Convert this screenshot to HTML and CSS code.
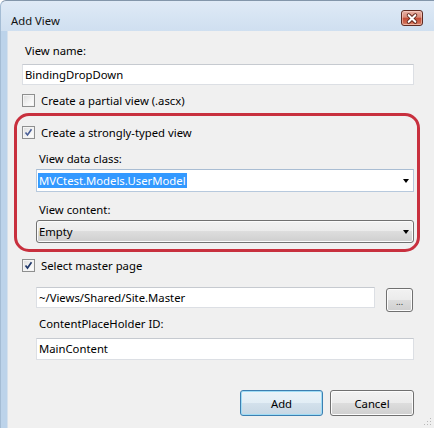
FILE: index.html
```html
<!DOCTYPE html>
<html>
<head>
<meta charset="utf-8">
<link rel="stylesheet" href="styles.css">
</head>
<body>
<div class="window">
  <div class="titlebar">
    <span class="title">Add View</span>
    <span class="close"><svg width="21" height="15" viewBox="0 0 21 15"><path d="M7 4 L14 11 M14 4 L7 11" stroke="#5a2016" stroke-width="4" stroke-linecap="round"/><path d="M7 4 L14 11 M14 4 L7 11" stroke="#ffffff" stroke-width="2.2" stroke-linecap="round"/></svg></span>
  </div>
  <div class="body">
    <div class="label">View name:</div>
    <div class="textbox">BindingDropDown</div>
    <div class="check first"><span class="box"></span><span>Create a partial view (.ascx)</span></div>
    <div class="group">
      <div class="check"><span class="box"><svg width="9" height="9" viewBox="0 0 9 9"><path d="M1.5 4.5 L3.5 7 L7.5 1.2" fill="none" stroke="#4a5f97" stroke-width="1.6"/></svg></span><span>Create a strongly-typed view</span></div>
      <div class="label sub">View data class:</div>
      <div class="combo edit"><span class="sel">MVCtest.Models.UserModel</span><span class="arrow"></span></div>
      <div class="label sub second">View content:</div>
      <div class="combo drop"><span class="val">Empty</span><span class="arrow"></span></div>
    </div>
    <div class="check third"><span class="box"><svg width="9" height="9" viewBox="0 0 9 9"><path d="M1.5 4.5 L3.5 7 L7.5 1.2" fill="none" stroke="#21396b" stroke-width="1.7"/></svg></span><span>Select master page</span></div>
    <div class="master-row">
      <div class="textbox master">~/Views/Shared/Site.Master</div>
      <div class="btn browse"><span>...</span></div>
    </div>
    <div class="label sub cph">ContentPlaceHolder ID:</div>
    <div class="textbox cph-box">MainContent</div>
    <div class="actions">
      <div class="btn default">Add</div>
      <div class="btn">Cancel</div>
    </div>
    <svg class="grip" width="8" height="10" viewBox="0 0 8 10"><g fill="#b8b8b8"><rect x="6" y="1" width="1" height="1"/><rect x="6" y="4" width="1" height="1"/><rect x="3" y="4" width="1" height="1"/><rect x="6" y="7" width="1" height="1"/><rect x="3" y="7" width="1" height="1"/><rect x="0" y="7" width="1" height="1"/></g></svg>
  </div>
</div>
</body>
</html>
```
FILE: styles.css
```css
html, body {
  margin: 0;
  padding: 0;
  width: 434px;
  height: 428px;
  overflow: hidden;
  background: #ffffff;
}

body {
  font-family: "Noto Sans", "Open Sans", sans-serif;
  font-size: 11.3px;
  color: #000000;
}

.window {
  box-sizing: border-box;
  width: 434px;
  height: 428px;
  display: flex;
  flex-direction: column;
  border-top: 1px solid #8396aa;
  border-left: 1px solid #a4bcd4;
  border-top-left-radius: 6px;
  background: linear-gradient(#dfeaf6 0px, #cfdff0 30px, #bcd3ea 30px);
}

.titlebar {
  box-sizing: border-box;
  height: 30px;
  padding-top: 8px;
  padding-left: 10px;
  padding-right: 11px;
  display: flex;
  align-items: center;
  justify-content: space-between;
}

.title {
  color: #111111;
  line-height: 15px;
}

.close {
  box-sizing: border-box;
  width: 22px;
  height: 16px;
  margin-top: -4px;
  border: 1px solid #5e2a22;
  border-radius: 3px;
  background: linear-gradient(#e9b3a8 0%, #d88a78 45%, #c24a35 50%, #cf6a52 85%, #e1987f 100%);
  box-shadow: inset 0 0 0 1px rgba(255, 220, 210, 0.5);
  display: flex;
  align-items: center;
  justify-content: center;
}

.close svg {
  display: block;
}

.body {
  position: relative;
  flex: 1;
  margin-left: 6px;
  background: #f0f0f0;
  box-shadow: inset 1px 0 0 #d6e1ec;
  padding: 12px 20px 0 15px;
  display: flex;
  flex-direction: column;
  align-items: flex-start;
}

.label {
  line-height: 15px;
  margin-left: 3px;
  white-space: nowrap;
}

.textbox {
  box-sizing: border-box;
  width: 392px;
  height: 21px;
  margin-top: 6px;
  background: #ffffff;
  border: 1px solid #dcdfe4;
  border-top-color: #c6cad0;
  padding-left: 2px;
  line-height: 19px;
  white-space: nowrap;
}

.check {
  display: flex;
  align-items: center;
  height: 13px;
  line-height: 15px;
  white-space: nowrap;
}

.check.first {
  margin-top: 9px;
}

.box {
  box-sizing: border-box;
  width: 13px;
  height: 13px;
  margin-right: 6px;
  border: 1px solid #8e8f8f;
  background: linear-gradient(135deg, #dcdcdc 0%, #f5f5f5 60%, #ffffff 100%);
  box-shadow: inset 0 0 0 1px #f4f4f4;
  display: flex;
  align-items: center;
  justify-content: center;
}

.box svg {
  display: block;
}

.group {
  box-sizing: border-box;
  width: 406px;
  height: 139px;
  margin-top: 6px;
  margin-left: -8px;
  border: 3px solid #c8303e;
  border-radius: 15px;
  padding: 10px 3px 0 5px;
  display: flex;
  flex-direction: column;
  align-items: flex-start;
}

.group .label.sub {
  margin-left: 17px;
  margin-top: 12px;
}

.group .label.sub.second {
  margin-top: 10px;
}

.combo {
  box-sizing: border-box;
  width: 378px;
  height: 23px;
  margin-top: 3px;
  margin-left: 14px;
  display: flex;
  align-items: center;
  justify-content: space-between;
  white-space: nowrap;
}

.combo.edit {
  background: #ffffff;
  border: 1px solid #b7c9dd;
  border-top-color: #a9bdd3;
  padding-left: 1px;
}

.sel {
  background: #3399ff;
  color: #ffffff;
  line-height: 15px;
  padding: 0 1px 0 1px;
}

.combo.drop {
  border: 1px solid #707070;
  border-radius: 3px;
  background: linear-gradient(#f2f2f2 0%, #ebebeb 50%, #dddddd 50%, #cfcfcf 100%);
  box-shadow: inset 0 0 0 1px #fbfbfb;
  padding-left: 2px;
}

.val {
  line-height: 15px;
}

.arrow {
  width: 0;
  height: 0;
  margin-right: 4px;
  border-left: 3.5px solid transparent;
  border-right: 3.5px solid transparent;
  border-top: 4px solid #000000;
}

.check.third {
  margin-top: 7px;
}

.master-row {
  display: flex;
  align-items: flex-start;
  margin-top: 15px;
  margin-left: 14px;
}

.textbox.master {
  width: 339px;
  margin-top: 0;
}

.btn {
  box-sizing: border-box;
  border: 1px solid #707070;
  border-radius: 3px;
  background: linear-gradient(#f2f2f2 0%, #ebebeb 50%, #dddddd 50%, #cfcfcf 100%);
  box-shadow: inset 0 0 0 1px #fcfcfc;
  display: flex;
  align-items: center;
  justify-content: center;
  line-height: 15px;
  color: #000000;
}

.btn.browse {
  width: 27px;
  height: 24px;
  margin-left: 11px;
  margin-top: 1px;
  font-size: 9px;
  color: #333333;
  align-items: flex-end;
  padding-bottom: 5px;
  line-height: 8px;
}

.label.cph {
  margin-left: 17px;
  margin-top: 4px;
}

.textbox.cph-box {
  width: 378px;
  height: 22px;
  margin-top: 7px;
  margin-left: 14px;
  line-height: 20px;
}

.actions {
  display: flex;
  align-self: flex-end;
  gap: 7px;
  margin-top: 30px;
}

.actions .btn {
  width: 84px;
  height: 26px;
}

.actions .btn.default {
  width: 83px;
  border-color: #3c7fb1;
  background: linear-gradient(#eaf3f9 0%, #e2edf5 50%, #d3e1ec 50%, #c7d7e4 100%);
  box-shadow: inset 0 0 0 1px #9fdcf5;
}

.grip {
  position: absolute;
  right: 2px;
  bottom: 1px;
}
```
